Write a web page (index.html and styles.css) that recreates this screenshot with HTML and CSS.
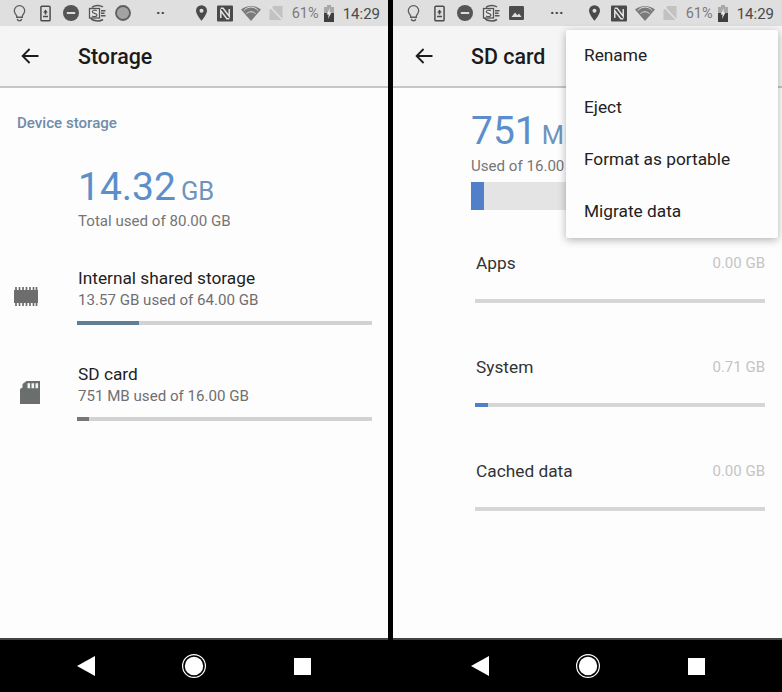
FILE: index.html
```html
<!DOCTYPE html>
<html lang="en">
<head>
<meta charset="utf-8">
<title>Storage</title>
<link rel="stylesheet" href="styles.css">
</head>
<body>
<svg class="defs" width="0" height="0" aria-hidden="true">
  <symbol id="i-bulb" viewBox="0 0 14 18"><path d="M7 1a5.6 5.6 0 0 0-5.6 5.6c0 2.4 1.6 3.6 2.5 5.4v1.6h6.2V12c.9-1.800 2.500-3 2.500-5.400A5.600 5.600 0 0 0 7 1z" fill="none" stroke="#5c5c5c" stroke-width="1.400"/><path d="M4.600 15.200c.3 1.700 1.300 2.200 2.400 2.200s2.100-.5 2.400-2.200" fill="none" stroke="#5c5c5c" stroke-width="1.500"/></symbol>
  <symbol id="i-upload" viewBox="0 0 12 18"><rect x="1" y="1" width="10" height="16" rx="1.200" fill="none" stroke="#4a4a4a" stroke-width="1.600"/><path d="M6 4.500 3.400 7.800h1.700v2.400h1.800V7.800h1.700zM3.300 11.500h5.400V13H3.300z" fill="#4a4a4a"/></symbol>
  <symbol id="i-dnd" viewBox="0 0 16 16"><circle cx="8" cy="8" r="8" fill="#555"/><rect x="3.800" y="7" width="8.400" height="2" fill="#ddd"/></symbol>
  <symbol id="i-se" viewBox="0 0 18 18"><path d="M4 3.500C6 .8 12 .8 15 3M2.800 14c2 3.300 8.500 3.800 12.200 1.500" fill="none" stroke="#555" stroke-width="1.500"/><rect x="1.500" y="4.500" width="10" height="9.500" fill="#e6e6e6" stroke="#555" stroke-width="1.300"/><path d="M13 6h4.500v1.500H13zM13 8.500h3.500V10H13zM13 11h4.500v1.500H13z" fill="#555"/><path d="M8.800 6.700C7.500 5.900 4.300 6 4.300 7.800c0 2 4.700 1.200 4.700 3.300 0 1.700-3.300 1.900-5 .9" fill="none" stroke="#555" stroke-width="1.200"/></symbol>
  <symbol id="i-disc" viewBox="0 0 16 16"><circle cx="8" cy="8" r="7" fill="#a3a3a3" stroke="#5e5e5e" stroke-width="1.800"/></symbol>
  <symbol id="i-image" viewBox="0 0 15 14"><rect width="15" height="14" rx="1.200" fill="#4d4d4d"/><path d="M2.500 11 6 6.500l2.400 2.800 1.600-1.700 2.500 3.400z" fill="#e0e0e0"/></symbol>
  <symbol id="i-pin" viewBox="0 0 12 17"><path fill-rule="evenodd" d="M6 0a6 6 0 0 0-6 6c0 4 6 11 6 11s6-7 6-11a6 6 0 0 0-6-6zm0 8.200A2.200 2.200 0 1 1 6 3.800a2.200 2.200 0 0 1 0 4.400z" fill="#4a4a4a"/></symbol>
  <symbol id="i-nfc" viewBox="0 0 17 17"><rect width="17" height="17" rx="1" fill="#4a4a4a"/><path d="M4 3h2.500l6.500 8.500V3.800M13 14h-2.500L4 5.500v7.700" fill="none" stroke="#e2e2e2" stroke-width="1.600"/></symbol>
  <symbol id="i-wifi" viewBox="0 0 20 15"><path d="M10 15 0 3.600C5.800-1.200 14.200-1.200 20 3.600z" fill="#7a7a7a"/><path d="M2.900 4.500C7-.1 13-.1 17.100 4.500M5.400 7.600c2.700-2.400 6.500-2.400 9.200 0" fill="none" stroke="#dedede" stroke-width="1"/></symbol>
  <symbol id="i-sim" viewBox="0 0 14 15"><path d="M4.500 0H14v15H0V4.500z" fill="#c2c2c2"/><path d="M0 0 14 15" stroke="#e4e4e4" stroke-width="1.400"/></symbol>
  <symbol id="i-batt" viewBox="0 0 10 17"><path d="M3 0h4v2h3v15H0V2h3z" fill="#a8a8a8"/><path d="M0 8h10v9H0z" fill="#3f3f3f"/><path d="M6 3 2.700 9.500h2L4 14l3.400-6.500h-2z" fill="#eee"/></symbol>
  <symbol id="i-back" viewBox="0 0 18 16"><path d="M17.500 8H1.800M8.600 1 1.600 8l7 7" fill="none" stroke="#1c1c1c" stroke-width="1.800"/></symbol>
  <symbol id="i-chip" viewBox="0 0 24 19"><rect x="0" y="3" width="24" height="13" fill="#6d6d6d"/><path d="M2 0v19M5.500 0v19M9 0v19M12.500 0v19M16 0v19M19.500 0v19M22.500 0v19" stroke="#6d6d6d" stroke-width="1.700" stroke-dasharray="3 13"/></symbol>
  <symbol id="i-sd" viewBox="0 0 20 23"><path d="M6.500 0H20v23H0V8l2.500-1.500V3z" fill="#6a6e6c"/><path d="M7.500 2.200h2.600v5H7.500zM11.500 2.200h2.600v5h-2.600zM15.500 2.200h2.600v5h-2.600z" fill="#f2f2f2"/></symbol>
  <symbol id="i-tri" viewBox="0 0 18 20"><path d="M18 0v20L0 10z" fill="#fff"/></symbol>
  <symbol id="i-home" viewBox="0 0 24 24"><circle cx="12" cy="12" r="11.400" fill="none" stroke="#fff" stroke-width="1.200"/><circle cx="12" cy="12" r="9.200" fill="#fff"/></symbol>
</svg>

<main class="screens">
  <section class="phone phone-left">
    <header class="status">
      <svg class="ic bulb"><use href="#i-bulb"/></svg>
      <svg class="ic upload"><use href="#i-upload"/></svg>
      <svg class="ic dnd"><use href="#i-dnd"/></svg>
      <svg class="ic se"><use href="#i-se"/></svg>
      <svg class="ic disc"><use href="#i-disc"/></svg>
      <span class="dots">··</span>
      <span class="status-right">
        <svg class="ic pin"><use href="#i-pin"/></svg>
        <svg class="ic nfc"><use href="#i-nfc"/></svg>
        <svg class="ic wifi"><use href="#i-wifi"/></svg>
        <svg class="ic sim"><use href="#i-sim"/></svg>
        <span class="pct">61%</span>
        <svg class="ic batt"><use href="#i-batt"/></svg>
        <span class="clock">14:29</span>
      </span>
    </header>
    <div class="appbar">
      <svg class="back"><use href="#i-back"/></svg>
      <h1 class="title">Storage</h1>
    </div>
    <div class="content">
      <h2 class="section">Device storage</h2>
      <div class="summary">
        <div class="big">14.32<span class="unit">GB</span></div>
        <div class="total">Total used of 80.00 GB</div>
      </div>
      <div class="vol vol-first">
        <svg class="vol-ic chip"><use href="#i-chip"/></svg>
        <div class="vol-body">
          <div class="vol-name">Internal shared storage</div>
          <div class="vol-sub">13.57 GB used of 64.00 GB</div>
          <div class="track"><div class="fill fill-int" style="width:21%"></div></div>
        </div>
      </div>
      <div class="vol">
        <svg class="vol-ic sd"><use href="#i-sd"/></svg>
        <div class="vol-body">
          <div class="vol-name">SD card</div>
          <div class="vol-sub">751 MB used of 16.00 GB</div>
          <div class="track"><div class="fill fill-sd" style="width:4%"></div></div>
        </div>
      </div>
    </div>
    <nav class="nav">
      <svg class="tri"><use href="#i-tri"/></svg>
      <svg class="home"><use href="#i-home"/></svg>
      <span class="square"></span>
    </nav>
  </section>

  <section class="phone phone-right">
    <header class="status">
      <svg class="ic bulb"><use href="#i-bulb"/></svg>
      <svg class="ic upload"><use href="#i-upload"/></svg>
      <svg class="ic dnd"><use href="#i-dnd"/></svg>
      <svg class="ic se"><use href="#i-se"/></svg>
      <svg class="ic image"><use href="#i-image"/></svg>
      <span class="dots dots-three">···</span>
      <span class="status-right">
        <svg class="ic pin"><use href="#i-pin"/></svg>
        <svg class="ic nfc"><use href="#i-nfc"/></svg>
        <svg class="ic wifi"><use href="#i-wifi"/></svg>
        <svg class="ic sim"><use href="#i-sim"/></svg>
        <span class="pct">61%</span>
        <svg class="ic batt"><use href="#i-batt"/></svg>
        <span class="clock">14:29</span>
      </span>
    </header>
    <div class="appbar">
      <svg class="back"><use href="#i-back"/></svg>
      <h1 class="title">SD card</h1>
    </div>
    <div class="content">
      <div class="sd-summary">
        <div class="big">751<span class="unit">MB</span></div>
        <div class="total total-sd">Used of 16.00 GB</div>
        <div class="thick"><div class="thick-fill" style="width:4.500%"></div></div>
      </div>
      <div class="cat cat-first">
        <div class="cat-head"><span class="cat-name">Apps</span><span class="cat-val">0.00 GB</span></div>
        <div class="cat-track"></div>
      </div>
      <div class="cat">
        <div class="cat-head"><span class="cat-name">System</span><span class="cat-val">0.71 GB</span></div>
        <div class="cat-track"><div class="cat-fill" style="width:4.500%"></div></div>
      </div>
      <div class="cat">
        <div class="cat-head"><span class="cat-name">Cached data</span><span class="cat-val">0.00 GB</span></div>
        <div class="cat-track"></div>
      </div>
    </div>
    <nav class="nav">
      <svg class="tri"><use href="#i-tri"/></svg>
      <svg class="home"><use href="#i-home"/></svg>
      <span class="square"></span>
    </nav>
    <ul class="menu">
      <li class="menu-item">Rename</li>
      <li class="menu-item">Eject</li>
      <li class="menu-item">Format as portable</li>
      <li class="menu-item">Migrate data</li>
    </ul>
  </section>
</main>
</body>
</html>
```

FILE: styles.css
```css
* { box-sizing: border-box; }
html, body { margin: 0; padding: 0; }
body {
  width: 782px;
  height: 692px;
  overflow: hidden;
  background: #000;
  font-family: Roboto, "Liberation Sans", sans-serif;
  color: #1f1f1f;
}
.defs { position: absolute; }
.screens { display: flex; gap: 5px; height: 692px; }
.phone { position: relative; display: flex; flex-direction: column; height: 692px; }
.phone-left { width: 388px; }
.phone-right { width: 389px; }

/* status bar */
.status {
  display: flex;
  align-items: center;
  height: 26px;
  padding-left: 13px;
  background: #dfdfdf;
}
.phone-right .status { padding-left: 14px; }
.ic { display: block; flex: none; }
.bulb { width: 13px; height: 18px; }
.upload { width: 11px; height: 17px; margin-left: 14px; }
.dnd { width: 16px; height: 16px; margin-left: 12px; }
.se { width: 18px; height: 18px; margin-left: 9px; }
.disc { width: 16px; height: 16px; margin-left: 9px; }
.image { width: 15px; height: 14px; margin-left: 9px; }
.dots { margin-left: 25px; width: 12px; font-size: 15px; font-weight: 700; line-height: 20px; color: #444; }
.dots-three { margin-left: 26px; width: 16px; }
.status-right { display: flex; align-items: center; margin-left: auto; padding-right: 8px; }
.pin { width: 11px; height: 16px; }
.nfc { width: 16px; height: 17px; margin-left: 10px; }
.wifi { width: 20px; height: 15px; margin-left: 8px; }
.sim { width: 14px; height: 14px; margin-left: 8px; }
.phone-right .pin { margin-right: 1px; }
.pct { margin-left: 9px; padding-top: 2px; font-size: 14.500px; line-height: 20px; color: #7a7a7a; }
.batt { width: 10px; height: 17px; margin-left: 5px; }
.clock { margin-left: 9px; padding-top: 1px; font-size: 15px; line-height: 20px; color: #4a4a4a; }

/* app bar */
.appbar {
  display: flex;
  align-items: center;
  height: 62px;
  padding-left: 21px;
  background: #f5f5f5;
  border-bottom: 2px solid #c6c6c6;
  box-shadow: 0 2px 3px rgba(0, 0, 0, 0.08);
}
.phone-right .appbar { padding-left: 22px; }
.phone-right .title { margin-left: 38px; }
.back { width: 18px; height: 16px; flex: none; }
.title { margin: 0 0 0 39px; padding-top: 1px; font-size: 21.400px; font-weight: 500; line-height: 28px; color: #1b1b1b; }

/* content */
.content { flex: 1; background: #fdfdfd; border-bottom: 2px solid #444; }
.section { margin: 25px 0 0 17px; font-size: 15.100px; font-weight: 500; line-height: 20px; color: #6f8ca8; }
.summary { margin: 32px 0 0 78px; }
.big { font-size: 39px; line-height: 44px; color: #5c8fca; }
.unit { margin-left: 5px; font-size: 25.500px; line-height: 1; color: #6f93bd; }
.total { margin-top: 2px; font-size: 15.100px; line-height: 20px; color: #757575; }

.vol { display: grid; grid-template-columns: 78px 1fr; margin-top: 38px; padding-right: 16px; }
.vol-first { margin-top: 36px; }
.vol-ic { display: block; }
.chip { width: 24px; height: 19px; margin: 20px 0 0 14px; }
.sd { width: 20px; height: 23px; margin: 18px 0 0 20px; }
.vol-name { font-size: 17.300px; line-height: 22px; color: #1f1f1f; }
.vol-sub { font-size: 15.100px; line-height: 22px; color: #6f6f6f; }
.track { height: 4px; margin: 10px 0 0 -1px; background: #d2d2d2; }
.fill { height: 4px; }
.fill-int { background: #5f7f99; }
.fill-sd { background: #777; }

/* sd card */
.sd-summary { margin: 21px 17px 0 78px; }
.total-sd { margin-top: 3px; }
.thick { height: 28px; margin-top: 6px; background: #e4e4e4; }
.thick-fill { height: 28px; background: #517fca; }
.cat { margin: 53px 17px 0 82px; }
.cat-first { margin-top: 42px; }
.cat-head { display: flex; justify-content: space-between; align-items: center; height: 22px; padding-left: 1px; }
.cat-name { font-size: 17.300px; color: #333; }
.cat-val { font-size: 15px; color: #c4c4c4; }
.cat-track { height: 4px; margin-top: 25px; background: #d6d6d6; }
.cat-fill { height: 4px; background: #517fca; }

/* nav bar */
.nav { position: relative; display: flex; align-items: center; height: 52px; padding-left: 77px; background: #000; }
.phone-right .nav { padding-left: 78px; }
.tri { width: 18px; height: 20px; flex: none; }
.home { width: 24px; height: 24px; margin-left: 87px; flex: none; }
.square { display: block; width: 17px; height: 17px; margin-left: 88px; background: #fff; }

/* overflow menu */
.menu {
  position: absolute;
  top: 30px;
  left: 173px;
  width: 212px;
  margin: 0;
  padding: 0;
  list-style: none;
  background: #fdfdfd;
  border-radius: 2px;
  box-shadow: 0 2px 8px rgba(0, 0, 0, 0.3);
}
.menu-item { height: 52px; padding-left: 18px; font-size: 17.300px; line-height: 51px; color: #222; }
```
